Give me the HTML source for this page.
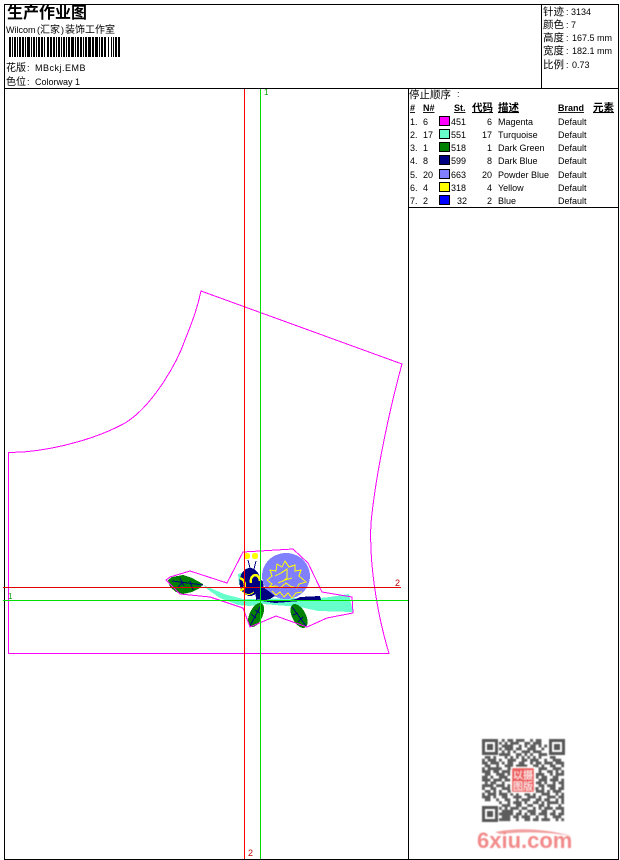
<!DOCTYPE html>
<html lang="zh">
<head>
<meta charset="utf-8">
<title>生产作业图</title>
<style>
html,body{margin:0;padding:0;background:#fff;width:620px;height:860px;overflow:hidden}
svg{display:block;position:absolute;left:0;top:0}
text{font-family:"Liberation Sans","WenQuanYi Zen Hei","Noto Sans CJK SC",sans-serif;font-size:9px;fill:#000}
.c{font-size:10.5px}
.d{font-size:10px}
.b{font-weight:bold;text-decoration:underline}
.m{text-anchor:end}
</style>
</head>
<body>
<svg width="620" height="860" viewBox="0 0 620 860" xmlns="http://www.w3.org/2000/svg">
<defs><filter id="soft" x="-5%" y="-5%" width="110%" height="110%"><feGaussianBlur stdDeviation=".45"/></filter></defs>
<rect width="620" height="860" fill="#fff"/>
<g shape-rendering="crispEdges" stroke="#000" stroke-width="1" fill="none">
<path d="M4.5 4.5H618.5V859.5H4.5Z"/>
<path d="M4.5 88.5H618.5M541.5 4.5V88.5M408.5 88.5V859.5M408.5 207.5H618.5"/>
</g>

<!-- header left -->
<text x="7" y="18" style="font-size:16px;font-weight:bold">生产作业图</text>
<text x="6" y="33">Wilcom</text><text x="37" y="33">(</text><text x="40" y="33" class="d">汇家</text><text x="61" y="33">)</text><text x="65" y="33" class="d">装饰工作室</text>
<g fill="#000" shape-rendering="crispEdges">
<path d="M9 37h2v20h-2zM12 37h1v20h-1zM14 37h2v20h-2zM17 37h1v20h-1zM19 37h2v20h-2zM22 37h2v20h-2zM25 37h1v20h-1zM27 37h3v20h-3zM31 37h1v20h-1zM33 37h2v20h-2zM36 37h1v20h-1zM38 37h2v20h-2zM41 37h2v20h-2zM44 37h1v20h-1zM47 37h2v20h-2zM50 37h2v20h-2zM53 37h2v20h-2zM56 37h1v20h-1zM58 37h2v20h-2zM61 37h1v20h-1zM63 37h2v20h-2zM66 37h1v20h-1zM68 37h2v20h-2zM71 37h3v20h-3zM75 37h1v20h-1zM77 37h2v20h-2zM80 37h2v20h-2zM83 37h1v20h-1zM85 37h2v20h-2zM88 37h3v20h-3zM92 37h2v20h-2zM95 37h3v20h-3zM99 37h1v20h-1zM101 37h2v20h-2zM104 37h2v20h-2zM108 37h1v20h-1zM111 37h1v20h-1zM113 37h1v20h-1zM115 37h2v20h-2zM118 37h2v20h-2z"/>
</g>
<text x="6" y="71" class="d">花版</text><text x="27" y="71">:</text><text x="35" y="71" style="letter-spacing:.5px">MBckj.EMB</text>
<text x="6" y="85" class="d">色位</text><text x="27" y="85">:</text><text x="35" y="85">Colorway 1</text>

<!-- header right -->
<text x="543" y="15" class="c">针迹</text><text x="566" y="15">:</text><text x="571" y="15">3134</text>
<text x="543" y="28" class="c">颜色</text><text x="566" y="28">:</text><text x="571" y="28">7</text>
<text x="543" y="41" class="c">高度</text><text x="566" y="41">:</text><text x="572" y="41">167.5 mm</text>
<text x="543" y="54" class="c">宽度</text><text x="566" y="54">:</text><text x="572" y="54">182.1 mm</text>
<text x="543" y="68" class="c">比例</text><text x="566" y="68">:</text><text x="572" y="68">0.73</text>

<!-- stop table -->
<text x="409" y="98" class="c">停止顺序</text><text x="457" y="97">:</text>
<g>
<text x="410" y="111" class="b">#</text>
<text x="423" y="111" class="b">N#</text>
<text x="454" y="111" class="b">St.</text>
<text x="472" y="111" class="b c">代码</text>
<text x="498" y="111" class="b c">描述</text>
<text x="558" y="111" class="b">Brand</text>
<text x="593" y="111" class="b c">元素</text>
</g>
<g shape-rendering="crispEdges" stroke="#000">
<rect x="439.5" y="116.5" width="10" height="9" fill="#ff00ff"/>
<rect x="439.5" y="129.5" width="10" height="9" fill="#66ffcc"/>
<rect x="439.5" y="142.5" width="10" height="9" fill="#008000"/>
<rect x="439.5" y="155.5" width="10" height="9" fill="#000080"/>
<rect x="439.5" y="169.5" width="10" height="9" fill="#8080ff"/>
<rect x="439.5" y="182.5" width="10" height="9" fill="#ffff00"/>
<rect x="439.5" y="195.5" width="10" height="9" fill="#0000ff"/>
</g>
<g>
<text x="410" y="125">1.</text><text x="423" y="125">6</text><text x="466" y="125" class="m">451</text><text x="492" y="125" class="m">6</text><text x="498" y="125">Magenta</text><text x="558" y="125">Default</text>
<text x="410" y="138">2.</text><text x="423" y="138">17</text><text x="466" y="138" class="m">551</text><text x="492" y="138" class="m">17</text><text x="498" y="138">Turquoise</text><text x="558" y="138">Default</text>
<text x="410" y="151">3.</text><text x="423" y="151">1</text><text x="466" y="151" class="m">518</text><text x="492" y="151" class="m">1</text><text x="498" y="151">Dark Green</text><text x="558" y="151">Default</text>
<text x="410" y="164">4.</text><text x="423" y="164">8</text><text x="466" y="164" class="m">599</text><text x="492" y="164" class="m">8</text><text x="498" y="164">Dark Blue</text><text x="558" y="164">Default</text>
<text x="410" y="178">5.</text><text x="423" y="178">20</text><text x="466" y="178" class="m">663</text><text x="492" y="178" class="m">20</text><text x="498" y="178">Powder Blue</text><text x="558" y="178">Default</text>
<text x="410" y="191">6.</text><text x="423" y="191">4</text><text x="466" y="191" class="m">318</text><text x="492" y="191" class="m">4</text><text x="498" y="191">Yellow</text><text x="558" y="191">Default</text>
<text x="410" y="204">7.</text><text x="423" y="204">2</text><text x="467" y="204" class="m">32</text><text x="492" y="204" class="m">2</text><text x="498" y="204">Blue</text><text x="558" y="204">Default</text>
</g>

<g shape-rendering="crispEdges">
<!-- garment outline -->
<path fill="none" stroke="#ff00ff" stroke-width="1" d="M8.5 653.5V452.5L23 452C60 449 100 437 125 423C150 408 175 368 185 340C192 322 197 310 201 291L402 364C392 400 376 470 371 523C369 560 376 610 389 653.5Z"/>

<!-- embroidery motif -->
<polygon fill="#66ffcc" points="203,585 215,590 224,594 243,599 300,598 320,598 330,597 349,594 353,612 318,611 300,607 275,605 263,604 250,606 238,605 220,598 207,589"/>
<polygon fill="#66ffcc" points="238,574 244,572 244,590 239,584"/>
<ellipse cx="286" cy="576" rx="24" ry="23" fill="#8080ff"/>
<polyline fill="none" stroke="#ffff00" stroke-width="1" points="267,580 272,576 270,570 276,571 277,564 282,567 285,561 289,567 295,565 295,571 301,570 299,576 306,582 299,584 297,588"/>
<polyline fill="none" stroke="#ffff00" stroke-width="1" points="267,580 272,584 269,587 276,586 280,588 286,583 290,586 297,588"/>
<polyline fill="none" stroke="#ffff00" stroke-width="1" points="275,576 281,573 287,569 287,578 283,581 278,583 285,580 292,578"/>
<polyline fill="none" stroke="#ffff00" stroke-width="1" points="272,591 276,595 280,592 284,597 288,593 292,598 296,593 302,592"/>
<polygon fill="#000080" points="262,601 270,599 275,596 262,586 258,598"/>
<polygon fill="#000080" points="262,601 290,600 296,599 300,597 320,596 321,600 300,601 275,603"/>
<ellipse cx="250" cy="582" rx="10.5" ry="14" fill="#000080"/>
<polygon fill="#000080" points="254,572 263,582 265,598 256,600"/>
<path d="M250 568L248 560M254 569L256 561" stroke="#000080" stroke-width="1" fill="none"/>
<circle cx="247" cy="556" r="3.2" fill="#ffff00"/>
<circle cx="255" cy="556" r="3.2" fill="#ffff00"/>
<path d="M251 583Q250 576 255 575Q259 575 260 581" stroke="#ffff00" stroke-width="2.4" fill="none"/>
<path d="M240 578Q245 580 245 586Q244 590 240 590" stroke="#ffff00" stroke-width="2.4" fill="none"/>
<path d="M243 592Q248 597 254 592" stroke="#ffff00" stroke-width="1" fill="none"/>
<polygon fill="#008000" points="168,580 172,577 183,575 192,578 203,584 200,588 192,592 183,594 176,592 170,587"/>
<path d="M172 581L203 585M180 578L184 586M190 581L193 590M178 587L183 582" stroke="#000080" stroke-width="1" fill="none"/>
<ellipse cx="256" cy="615" rx="6.5" ry="13" transform="rotate(25 256 615)" fill="#008000"/>
<path d="M250 626L261 605M251 614L256 618M255 610L260 613" stroke="#000080" stroke-width="1" fill="none"/>
<ellipse cx="299" cy="616" rx="6.8" ry="13" transform="rotate(-28 299 616)" fill="#008000"/>
<path d="M292 607L306 626M293 615L298 613M298 622L303 617" stroke="#000080" stroke-width="1" fill="none"/>
<polygon fill="none" stroke="#ff00ff" stroke-width="1" points="166,580 170,577 190,571 227,583 243,552 293,549 308,563 322,592 352,597 353,613 327,618 307,627 276,616 250,627 243,608 210,597 180,594"/>
</g>

<!-- cross hairs -->
<g shape-rendering="crispEdges" stroke-width="1" fill="none">
<path d="M3 587.5H401" stroke="#e00000"/>
<path d="M244.5 89V859" stroke="#ff0000"/>
<path d="M260.5 89V859" stroke="#00e000"/>
<path d="M3 600.5H408" stroke="#00e000"/>
</g>
<text x="264" y="95" style="fill:#00a000;font-size:8px">1</text>
<text x="8" y="599" style="fill:#00a000;font-size:8px">1</text>
<text x="395" y="586" style="fill:#c00000">2</text>
<text x="248" y="856" style="fill:#c00000">2</text>

<!-- QR -->
<g filter="url(#soft)">
<g transform="translate(482 739) scale(2.83)" opacity=".8">
<path fill="none" stroke="#333" stroke-width="1" d="
M7 .5h1M9 .5h2M12 .5h3M17 .5h1M19 .5h2
M6 1.5h1M8 1.5h1M10 1.5h3M15 1.5h2M18 1.5h3
M7 2.5h4M13 2.5h1M15 2.5h1M17 2.5h2M20 2.5h1M22 2.5h1
M6 3.5h1M8 3.5h3M12 3.5h2M16 3.5h3M21 3.5h1
M7 4.5h1M9 4.5h1M11 4.5h1M14 4.5h3M18 4.5h3
M6 5.5h4M12 5.5h2M15 5.5h1M17 5.5h1M20 5.5h3
M1 6.5h2M4 6.5h1M8 6.5h1M10 6.5h1M12 6.5h1M14 6.5h1M16 6.5h1M18 6.5h1M20 6.5h1M24 6.5h2
M0 7.5h1M2 7.5h3M6 7.5h1M9 7.5h3M14 7.5h2M17 7.5h3M22 7.5h1M25 7.5h3
M0 8.5h2M3 8.5h3M7 8.5h1M9 8.5h2M13 8.5h2M17 8.5h1M19 8.5h2M22 8.5h3M26 8.5h3
M1 9.5h2M5 9.5h1M8 9.5h3M12 9.5h4M18 9.5h2M21 9.5h1M24 9.5h2M28 9.5h1
M0 10.5h1M2 10.5h4M6 10.5h1M9 10.5h2M14 10.5h1M16 10.5h2M20 10.5h3M25 10.5h3
M0 11.5h3M4 11.5h2M7 11.5h3M11 11.5h1M17 11.5h1M20 11.5h1M23 11.5h2M26 11.5h1M28 11.5h1
M1 12.5h2M5 12.5h3M9 12.5h1M19 12.5h3M24 12.5h1M26 12.5h3
M0 13.5h2M3 13.5h1M6 13.5h3M19 13.5h1M21 13.5h2M25 13.5h2
M0 14.5h3M4 14.5h3M8 14.5h2M20 14.5h3M24 14.5h3M28 14.5h1
M1 15.5h1M3 15.5h2M7 15.5h1M19 15.5h2M22 15.5h1M25 15.5h1M27 15.5h2
M0 16.5h4M5 16.5h3M9 16.5h1M20 16.5h2M23 16.5h3M28 16.5h1
M0 17.5h1M3 17.5h2M7 17.5h3M11 17.5h1M18 17.5h2M21 17.5h1M24 17.5h2M27 17.5h2
M1 18.5h2M4 18.5h1M6 18.5h1M9 18.5h3M13 18.5h3M17 18.5h1M19 18.5h3M23 18.5h1M25 18.5h3
M0 19.5h1M2 19.5h3M6 19.5h3M10 19.5h1M12 19.5h1M15 19.5h2M18 19.5h1M21 19.5h3M26 19.5h1M28 19.5h1
M0 20.5h3M4 20.5h1M7 20.5h2M11 20.5h3M16 20.5h3M20 20.5h1M23 20.5h3M27 20.5h2
M1 21.5h2M5 21.5h1M8 21.5h2M12 21.5h1M14 21.5h3M19 21.5h2M22 21.5h2M26 21.5h1M28 21.5h1
M6 22.5h1M9 22.5h1M11 22.5h3M15 22.5h1M18 22.5h2M21 22.5h1M23 22.5h4M28 22.5h1
M7 23.5h3M12 23.5h2M16 23.5h2M20 23.5h2M23 23.5h1M27 23.5h1
M6 24.5h1M8 24.5h1M10 24.5h3M14 24.5h2M18 24.5h1M20 24.5h1M22 24.5h3M26 24.5h3
M7 25.5h4M13 25.5h1M16 25.5h3M21 25.5h2M25 25.5h1M28 25.5h1
M6 26.5h5M12 26.5h2M15 26.5h1M17 26.5h2M20 26.5h3M24 26.5h2M27 26.5h2
M7 27.5h3M11 27.5h2M14 27.5h3M19 27.5h1M22 27.5h1M25 27.5h3
M6 28.5h4M12 28.5h1M15 28.5h2M18 28.5h2M21 28.5h3M26 28.5h1M28 28.5h1"/>
</g>
<g fill="#444" fill-rule="evenodd" opacity=".9">
<path d="M482 739h16v16h-16zM485 742v10h10v-10zM487 744h6v6h-6z"/>
<path d="M549 739h16v16h-16zM552 742v10h10v-10zM554 744h6v6h-6z"/>
<path d="M482 806h16v16h-16zM485 809v10h10v-10zM487 811h6v6h-6z"/>
</g>
<!-- seal -->
<rect x="511" y="767" width="24" height="26" fill="#fff"/>
<rect x="512" y="768" width="22" height="24" rx="1" fill="#ee5f5f"/>
<text x="513" y="779" style="fill:#fff;font-size:10px">以</text>
<text x="523" y="779" style="fill:#fff;font-size:10px">摄</text>
<text x="513" y="790" style="fill:#fff;font-size:10px">图</text>
<text x="523" y="790" style="fill:#fff;font-size:10px">版</text>
<!-- 6xiu logo -->
<path d="M495 832Q530 825 572 836Q535 830 500 834Z" fill="#f2a0a0"/>
<text x="477" y="848" style="font-size:22px;font-weight:bold;fill:#f28a8a">6xiu.com</text>
</g>
</svg>
</body>
</html>
